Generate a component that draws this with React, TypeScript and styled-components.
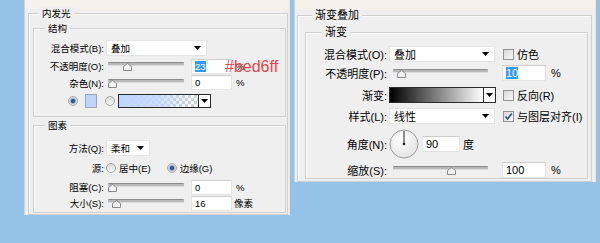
import styled, { createGlobalStyle } from "styled-components";

const GlobalStyle = createGlobalStyle`
	html, body {
		margin: 0;
		padding: 0;
	}
	body {
		background: #95c2e7;
		font-family: "Liberation Sans", "Noto Sans CJK SC", sans-serif;
		color: #000;
	}
`;

function DropArrow() {
	return (
		<svg width="7" height="4" viewBox="0 0 7 4">
			<path d="M0 0 H7 L3.5 4 Z" fill="#000" />
		</svg>
	);
}

function Slider({ w, ml, pos }: { w: number; ml: number; pos: number }) {
	return (
		<SliderBody $w={w} $ml={ml}>
			<SliderTrack />
			<SliderThumb style={{ left: `calc(${pos} * (100% - 9px))` }}>
				<svg width="9" height="8" viewBox="0 0 9 8">
					<path
						d="M0.5 7.5 V3.5 L4.5 0.5 L8.5 3.5 V7.5 Z"
						fill="#f3f3f3"
						stroke="#8a8a8a"
					/>
				</svg>
			</SliderThumb>
		</SliderBody>
	);
}

function Checkbox({ checked, ml }: { checked?: boolean; ml: number }) {
	return (
		<CheckBoxBox $ml={ml}>
			{checked && (
				<svg width="9" height="9" viewBox="0 0 9 9">
					<path
						d="M1.5 4.5 L3.6 7 L7.8 1.5"
						fill="none"
						stroke="#2c4f8c"
						strokeWidth="1.6"
					/>
				</svg>
			)}
		</CheckBoxBox>
	);
}

function AngleDial() {
	return (
		<svg width="30" height="30" viewBox="0 0 30 30">
			<defs>
				<radialGradient id="dialFill" cx="40%" cy="35%" r="70%">
					<stop offset="0" stopColor="#ffffff" />
					<stop offset="1" stopColor="#e2e2e2" />
				</radialGradient>
			</defs>
			<circle cx="15" cy="15" r="14" fill="url(#dialFill)" stroke="#9b9b9b" />
			<line x1="15" y1="15" x2="15" y2="2" stroke="#222" strokeWidth="1" />
			<circle cx="15" cy="15" r="1.3" fill="#222" />
		</svg>
	);
}

function InnerGlowPanel() {
	return (
		<Panel $w={266} $h={215} $pad="13px 1px 0 3px" $fs={9.5}>
			<GroupBox $pad="0 1px 1px 4px">
				<Caption $ml={6} $mb={0}>内发光</Caption>
				<GroupBox $pad="0 0 4px 0" $mt={8}>
					<Caption $ml={11} $mb={4}>结构</Caption>
					<Row $h={18}>
						<Label $w={70}>混合模式(B):</Label>
						<Select $w={101}>
							<span>叠加</span>
							<DropArrow />
						</Select>
					</Row>
					<Row $h={18}>
						<Label $w={70}>不透明度(O):</Label>
						<Slider w={76} ml={2} pos={0.22} />
						<NumberBox $w={41} $ml={7}>
							<Selected>23</Selected>
						</NumberBox>
						<Unit $ml={4}>%</Unit>
						<ColorNote>#bed6ff</ColorNote>
					</Row>
					<Row $h={15}>
						<Label $w={70}>杂色(N):</Label>
						<Slider w={76} ml={2} pos={0} />
						<NumberBox $w={41} $ml={7}>0</NumberBox>
						<Unit $ml={4}>%</Unit>
					</Row>
					<Row $h={22} $indent={34}>
						<Radio $on />
						<Swatch />
						<Radio $ml={8} />
						<GradientPicker $w={93} $ml={3}>
							<GradientBar $fill="linear-gradient(to right, #bed6ff 0%, rgba(190,214,255,0.85) 45%, rgba(190,214,255,0) 100%), repeating-conic-gradient(#d2d2d2 0 25%, #ffffff 0 50%) 0 0 / 6px 6px" />
							<ArrowBox>
								<DropArrow />
							</ArrowBox>
						</GradientPicker>
					</Row>
				</GroupBox>
				<GroupBox $pad="0 0 1px 0" $mt={8}>
					<Caption $ml={11} $mb={7}>图素</Caption>
					<Row $h={18}>
						<Label $w={70}>方法(Q):</Label>
						<Select $w={44}>
							<span>柔和</span>
							<DropArrow />
						</Select>
					</Row>
					<Row $h={22}>
						<Label $w={70}>源:</Label>
						<Radio $ml={0} />
						<OptionText>居中(E)</OptionText>
						<Radio $ml={16} $on />
						<OptionText>边缘(G)</OptionText>
					</Row>
					<Row $h={16}>
						<Label $w={70}>阻塞(C):</Label>
						<Slider w={76} ml={2} pos={0} />
						<NumberBox $w={41} $ml={7}>0</NumberBox>
						<Unit $ml={4}>%</Unit>
					</Row>
					<Row $h={16}>
						<Label $w={70}>大小(S):</Label>
						<Slider w={76} ml={2} pos={0.06} />
						<NumberBox $w={41} $ml={7}>16</NumberBox>
						<Unit $ml={2}>像素</Unit>
					</Row>
				</GroupBox>
			</GroupBox>
		</Panel>
	);
}

function GradientOverlayPanel() {
	return (
		<Panel $w={302} $h={182} $pad="15px 3px 0 2px" $fs={11}>
			<GroupBox $pad="0 3px 2px 7px">
				<Caption $ml={7} $mb={0}>渐变叠加</Caption>
				<GroupBox $pad="0 0 1px 0" $mt={10}>
					<Caption $ml={16} $mb={6}>渐变</Caption>
					<Row $h={18}>
						<Label $w={81}>混合模式(O):</Label>
						<Select $w={106}>
							<span>叠加</span>
							<DropArrow />
						</Select>
						<Checkbox ml={8} />
						<OptionText>仿色</OptionText>
					</Row>
					<Row $h={20}>
						<Label $w={81}>不透明度(P):</Label>
						<Slider w={95} ml={4} pos={0.05} />
						<NumberBox $w={44} $ml={14} $h={16}>
							<Selected>10</Selected>
						</NumberBox>
						<Unit $ml={5}>%</Unit>
					</Row>
					<Row $h={24}>
						<Label $w={81}>渐变:</Label>
						<GradientPicker $w={107} $ml={0} $h={16}>
							<GradientBar $fill="linear-gradient(to right, #000000, #ffffff)" />
							<ArrowBox>
								<DropArrow />
							</ArrowBox>
						</GradientPicker>
						<Checkbox ml={7} />
						<OptionText>反向(R)</OptionText>
					</Row>
					<Row $h={18}>
						<Label $w={81}>样式(L):</Label>
						<Select $w={106}>
							<span>线性</span>
							<DropArrow />
						</Select>
						<Checkbox ml={8} checked />
						<OptionText>与图层对齐(I)</OptionText>
					</Row>
					<Row $h={38}>
						<Label $w={81}>角度(N):</Label>
						<AngleDial />
						<NumberBox $w={38} $ml={3} $h={16}>
							90
						</NumberBox>
						<Unit $ml={3}>度</Unit>
					</Row>
					<Row $h={14}>
						<Label $w={81}>缩放(S):</Label>
						<Slider w={95} ml={4} pos={0.63} />
						<NumberBox $w={44} $ml={14} $h={16}>
							100
						</NumberBox>
						<Unit $ml={5}>%</Unit>
					</Row>
				</GroupBox>
			</GroupBox>
		</Panel>
	);
}

export default function App() {
	return (
		<>
			<GlobalStyle />
			<Page>
				<InnerGlowPanel />
				<GradientOverlayPanel />
			</Page>
		</>
	);
}

const Page = styled.div`
	display: flex;
	align-items: flex-start;
	gap: 4px;
	width: 600px;
	height: 243px;
	padding-left: 24px;
	box-sizing: border-box;
	overflow: hidden;
`;

const Panel = styled.div<{ $w: number; $h: number; $pad: string; $fs: number }>`
	width: ${({ $w }) => $w}px;
	height: ${({ $h }) => $h}px;
	flex-shrink: 0;
	box-sizing: border-box;
	padding: ${({ $pad }) => $pad};
	font-size: ${({ $fs }) => $fs}px;
	background: linear-gradient(#f7f1ec 0, #f7f1ec 9px, #efefef 9px);
	border-left: 1px solid #d5d5d5;
	border-right: 1px solid #e6e6e6;
`;

const GroupBox = styled.section<{ $pad: string; $mt?: number }>`
	margin-top: ${({ $mt = 0 }) => $mt}px;
	padding: ${({ $pad }) => $pad};
	border: 1px solid #d0d0d0;
	box-shadow: inset 1px 1px 0 #fafafa;
`;

const Caption = styled.div<{ $ml: number; $mb: number }>`
	width: fit-content;
	margin: -7px 0 ${({ $mb }) => $mb}px ${({ $ml }) => $ml}px;
	padding: 0 3px;
	line-height: 13px;
	background: #efefef;
`;

const Row = styled.div<{ $h: number; $indent?: number }>`
	position: relative;
	display: flex;
	align-items: center;
	height: ${({ $h }) => $h}px;
	padding-left: ${({ $indent = 0 }) => $indent}px;
	white-space: nowrap;
`;

const Label = styled.span<{ $w: number }>`
	width: ${({ $w }) => $w}px;
	flex-shrink: 0;
	margin-right: 2px;
	text-align: right;
`;

const Select = styled.div<{ $w: number }>`
	display: flex;
	align-items: center;
	justify-content: space-between;
	width: ${({ $w }) => $w}px;
	height: 16px;
	box-sizing: border-box;
	padding: 0 5px 0 4px;
	background: #fff;
	border: 1px solid #e4e4e4;
	flex-shrink: 0;
`;

const SliderBody = styled.div<{ $w: number; $ml: number }>`
	position: relative;
	width: ${({ $w }) => $w}px;
	height: 10px;
	margin-left: ${({ $ml }) => $ml}px;
	padding-top: 1px;
	box-sizing: border-box;
	flex-shrink: 0;
`;

const SliderTrack = styled.div`
	height: 4px;
	box-sizing: border-box;
	background: #b8b8b8;
	border-top: 1px solid #8c8c8c;
	border-bottom: 1px solid #dcdcdc;
	border-radius: 1px;
`;

const SliderThumb = styled.div`
	position: absolute;
	top: 2px;
	width: 9px;
	height: 8px;
	line-height: 0;
`;

const NumberBox = styled.div<{ $w: number; $ml: number; $h?: number }>`
	display: flex;
	align-items: center;
	width: ${({ $w }) => $w}px;
	height: ${({ $h = 15 }) => $h}px;
	margin-left: ${({ $ml }) => $ml}px;
	padding-left: 3px;
	box-sizing: border-box;
	background: #fff;
	border: 1px solid #e3e3e3;
	border-top-color: #cdcdcd;
	flex-shrink: 0;
`;

const Selected = styled.span`
	background: #3399ff;
	color: #fff;
`;

const Unit = styled.span<{ $ml: number }>`
	margin-left: ${({ $ml }) => $ml}px;
`;

const ColorNote = styled.span`
	position: absolute;
	left: 191px;
	top: 1px;
	font-size: 16px;
	line-height: 18px;
	color: #e3464c;
`;

const Radio = styled.span<{ $on?: boolean; $ml?: number }>`
	width: 10px;
	height: 10px;
	flex-shrink: 0;
	box-sizing: border-box;
	border-radius: 50%;
	margin-left: ${({ $ml = 0 }) => $ml}px;
	border: 1px solid #a5a5a5;
	background: ${({ $on }) =>
		$on
			? "radial-gradient(circle, #3a5a84 0 1.8px, #8fb0d6 2.4px, #e6edf5 4px)"
			: "linear-gradient(#d9d9d9, #f7f7f7)"};
`;

const OptionText = styled.span`
	margin-left: 3px;
`;

const Swatch = styled.span`
	width: 12px;
	height: 14px;
	margin-left: 7px;
	box-sizing: border-box;
	background: #bed6ff;
	border: 1px solid #9aa6b5;
	flex-shrink: 0;
`;

const GradientPicker = styled.div<{ $w: number; $ml: number; $h?: number }>`
	display: flex;
	width: ${({ $w }) => $w}px;
	height: ${({ $h = 14 }) => $h}px;
	margin-left: ${({ $ml }) => $ml}px;
	flex-shrink: 0;
`;

const GradientBar = styled.div<{ $fill: string }>`
	flex: 1;
	border: 1px solid #2a2a2a;
	background: ${({ $fill }) => $fill};
`;

const ArrowBox = styled.div`
	display: flex;
	align-items: center;
	justify-content: center;
	width: 12px;
	box-sizing: border-box;
	background: #fff;
	border: 1px solid #2a2a2a;
	border-left: none;
`;

const CheckBoxBox = styled.span<{ $ml: number }>`
	display: flex;
	align-items: center;
	justify-content: center;
	width: 11px;
	height: 11px;
	box-sizing: border-box;
	margin-left: ${({ $ml }) => $ml}px;
	border: 1px solid #929292;
	background: linear-gradient(135deg, #d8d8d8, #fafafa);
	flex-shrink: 0;
`;
